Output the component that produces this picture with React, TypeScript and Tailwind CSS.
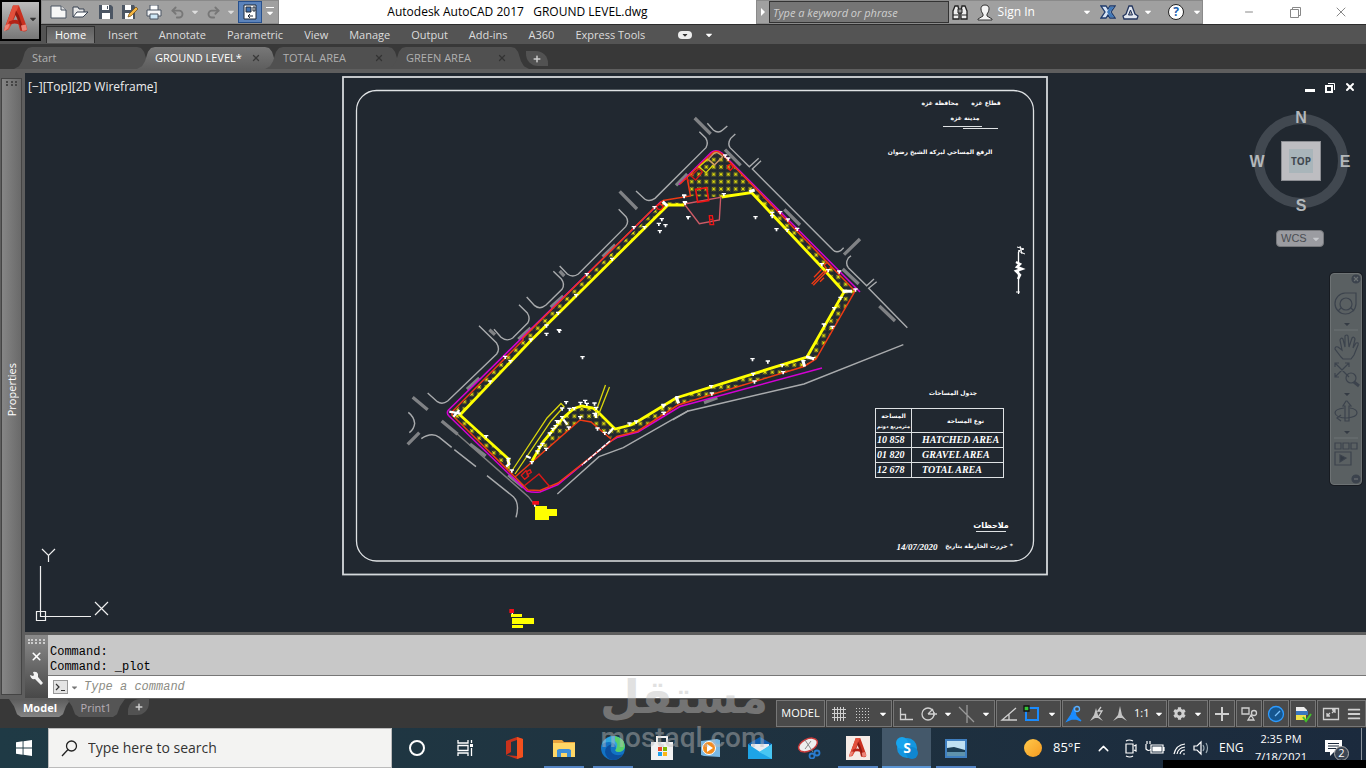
import React from "react";
import {
  FaBars,
  FaCaretDown,
  FaCog,
  FaPlus,
} from "react-icons/fa";
import {
  ChevronUp,
  Minus,
  Undo2,
  Redo2,
  X,
} from "lucide-react";

const menuTabs = [
  "Insert",
  "Annotate",
  "Parametric",
  "View",
  "Manage",
  "Output",
  "Add-ins",
  "A360",
  "Express Tools",
];

function AutocadMark({ className }: { className: string }) {
  return (
    <svg viewBox="0 0 24 27" className={className} aria-hidden="true">
      <path d="M9 0h6l8 22q1 4-3 4l-4-1L12 9 7 20l-4 5-3-1z" fill="#c9301f" />
      <path d="M9 0h6l-5 11-5 13-5 1z" fill="#e2503c" />
      <path d="M5 16q8-4 12 1v3q-6-4-13 0z" fill="#b32217" />
      <path d="M12 5l3 5 4 12-2 3q-1-9-6-16z" fill="#8f1a12" />
      <path d="M1 20l5-2-2 5-4 3zM17 20l5-1 1 5q-2 2-5 1z" fill="#ec8478" />
    </svg>
  );
}

function Caret({ className = "text-white" }: { className?: string }) {
  return <FaCaretDown className={"shrink-0 " + className} size={10} />;
}

function QuickAccess() {
  return (
    <div className="flex h-6 w-[238px] shrink-0 items-center border border-[#8a8a8a] bg-[#a0a0a0] pl-2">
      <button aria-label="New" className="w-[22px]">
        <svg width="17" height="14" viewBox="0 0 17 14">
          <path d="M1 1h10l5 4v8H1z" fill="#f6f6f6" stroke="#4b5563" />
          <path d="M11 1v4h5" fill="#ddd" stroke="#4b5563" />
        </svg>
      </button>
      <button aria-label="Open" className="w-[22px]">
        <svg width="17" height="14" viewBox="0 0 17 14">
          <path d="M1 12V2h5l1 2h5v3" fill="#e8e8e8" stroke="#374151" />
          <path d="M1 12l4-5h11l-5 5z" fill="#fff" stroke="#374151" />
        </svg>
      </button>
      <button aria-label="Save" className="flex w-6 justify-center">
        <svg width="14" height="14" viewBox="0 0 14 14">
          <path d="M0 0h12l2 2v12H0z" fill="#4b5563" />
          <path d="M3 0h7v5H3zM3 8h8v6H3z" fill="#fff" />
          <path d="M8 1h1v3H8z" fill="#4b5563" />
        </svg>
      </button>
      <button aria-label="Save As" className="flex w-6 justify-center">
        <svg width="16" height="14" viewBox="0 0 16 14">
          <path d="M0 0h12l1 2v12H0z" fill="#4b5563" />
          <path d="M3 0h6v5H3zM3 8h8v6H3z" fill="#fff" />
          <path d="M14 2l2 2-7 7-3 1 1-3z" fill="#f5b642" stroke="#6b4a12" strokeWidth=".7" />
        </svg>
      </button>
      <button aria-label="Plot" className="flex w-6 justify-center">
        <svg width="16" height="15" viewBox="0 0 16 15">
          <path d="M4 0h8v6H4z" fill="#fff" stroke="#4b5563" />
          <path d="M1 5h14v6H1z" fill="#f3f4f6" stroke="#4b5563" />
          <path d="M4 9h8v5H4z" fill="#cfe8f7" stroke="#4b5563" />
        </svg>
      </button>
      <button aria-label="Undo" className="ml-1 w-5 text-[#777]">
        <Undo2 size={15} strokeWidth={3} />
      </button>
      <button aria-label="Undo history" className="w-4">
        <Caret className="text-[#ddd]" />
      </button>
      <button aria-label="Redo" className="w-5 text-[#777]">
        <Redo2 size={15} strokeWidth={3} />
      </button>
      <button aria-label="Redo history" className="w-3">
        <Caret className="text-[#ddd]" />
      </button>
      <button
        aria-label="Workspace"
        className="flex h-[22px] w-6 shrink-0 items-center justify-center border border-[#27508c] bg-[#5b83bb]"
      >
        <svg width="14" height="16" viewBox="0 0 14 16">
          <path d="M1 1h12v14H1z" fill="#fff" stroke="#1f2937" />
          <path d="M3 3h5v5H3z" fill="#3f70b0" stroke="#1f2937" />
          <path d="M10 3h2v4h-2zM5 12h5M7 10l-2 2 2 2" fill="none" stroke="#1f2937" />
        </svg>
      </button>
      <button aria-label="Customize" className="flex flex-col items-center pl-[3px]">
        <span className="h-px w-2 bg-white" />
        <Caret />
      </button>
    </div>
  );
}

function SearchBlock() {
  return (
    <div className="flex h-6 w-[447px] shrink-0 items-center border border-[#8a8a8a] bg-[#a0a0a0]">
      <svg width="12" height="10" viewBox="0 0 12 10" className="shrink-0">
        <path d="M4 1l4 4-4 4z" fill="#fff" />
      </svg>
      <input
        aria-label="Search help"
        placeholder="Type a keyword or phrase"
        className="h-[22px] w-[180px] shrink-0 border border-[#333] bg-[#757575] px-[3px] text-[11px] italic text-white placeholder:text-[#cfcfcf]"
      />
      <button aria-label="Search" className="flex w-6 justify-center">
        <svg width="16" height="16" viewBox="0 0 16 16">
          <path d="M3 2h3l1 5v8H1V7zM10 2h3l2 5v8H9V7z" fill="#eee" stroke="#222" strokeWidth="1.300" />
          <path d="M6 5h4v4H6zM1 11h5M10 11h5" fill="#999" stroke="#222" />
        </svg>
      </button>
      <button className="flex w-[136px] items-center text-xs text-white">
        <svg width="18" height="17" viewBox="0 0 18 17" className="mx-1">
          <path d="M9 1c6 0 4 7 2 9v2l5 3v1H2v-1l5-3v-2C5 8 3 1 9 1z" fill="#f4f4f4" stroke="#333" />
        </svg>
        Sign In
        <span className="ml-auto pr-2">
          <Caret />
        </span>
      </button>
      <button aria-label="Exchange" className="w-6">
        <svg width="16" height="14" viewBox="0 0 16 14">
          <path d="M1 1h5l2 3 2-3h5l-4 6 4 6h-5l-2-3-2 3H1l4-6z" fill="#d9e5f5" stroke="#1e3a6b" strokeWidth="1.300" />
          <path d="M10 2h4l-4 5 4 5h-4L7 7z" fill="#3f78b8" />
        </svg>
      </button>
      <button aria-label="Autodesk 360" className="flex w-9 items-center">
        <svg width="17" height="15" viewBox="0 0 17 15">
          <path d="M7 1h3l3 8 3 2-1 3H2l-1-3 3-2z" fill="#e3e8f0" stroke="#24365e" strokeWidth="1.300" />
          <path d="M8.500 5l2 5h-4z" fill="#a0a0a0" stroke="#24365e" />
        </svg>
        <span className="pl-1">
          <Caret />
        </span>
      </button>
      <button aria-label="Help" className="ml-3 flex items-center">
        <span className="flex size-4 items-center justify-center rounded-full border border-[#222] bg-white text-xs font-bold text-[#1d5fae]">
          ?
        </span>
        <span className="pl-2">
          <Caret />
        </span>
      </button>
    </div>
  );
}

function Header() {
  return (
    <header className="flex bg-[#545454]">
      <button
        aria-label="Application menu"
        className="flex h-[41px] w-[41px] shrink-0 items-center border-2 border-black bg-linear-to-b from-[#bdbdbd] to-[#777] pb-1 pl-[2px]"
      >
        <AutocadMark className="h-7 w-6" />
        <FaCaretDown size={10} className="shrink-0 text-[#333]" />
      </button>
      <div className="flex min-w-0 flex-1 flex-col">
        <div className="flex h-[25px] items-start border-b border-[#2c2c2c] bg-white">
          <QuickAccess />
          <h1 className="min-w-0 flex-1 truncate text-center text-xs leading-6 text-black">
            Autodesk AutoCAD 2017 &nbsp; GROUND LEVEL.dwg
          </h1>
          <SearchBlock />
          <div className="flex h-6 w-[163px] shrink-0 justify-end pr-[2px] text-[#888]">
            <button aria-label="Minimize" className="flex w-[46px] items-center justify-center">
              <Minus size={12} strokeWidth={2} />
            </button>
            <button aria-label="Restore" className="flex w-[46px] items-center justify-center">
              <svg width="11" height="11" viewBox="0 0 11 11" fill="none" stroke="#888">
                <path d="M.5 2.500h8v8h-8zM2.500 2.500v-2h8v8h-2" />
              </svg>
            </button>
            <button aria-label="Close" className="flex w-[46px] items-center justify-center">
              <X size={16} strokeWidth={1.500} />
            </button>
          </div>
        </div>
        <nav className="flex h-[19px] items-center gap-[21px] pl-[5px] text-[11px] text-[#dcdcdc]">
          <button className="-mr-2 h-[17px] border border-b-0 border-[#2f2f2f] bg-linear-to-b from-[#606060] to-[#7a7a7a] px-2 leading-4 text-white">
            Home
          </button>
          {menuTabs.map((t) => (
            <button key={t} className="whitespace-nowrap leading-4">
              {t}
            </button>
          ))}
          <button aria-label="Ribbon display" className="ml-3 flex items-center gap-3">
            <span className="flex h-2 w-[14px] items-center justify-center rounded-sm bg-[#eee]">
              <FaCaretDown size={8} className="text-[#333]" />
            </span>
            <Caret />
          </button>
        </nav>
      </div>
    </header>
  );
}

const tabShape =
  "h-[22px] shrink-0 flex items-center pl-[18px] pr-[22px] text-[11px] [clip-path:polygon(0_100%,5px_88%,8px_65%,11px_22%,14px_5%,18px_0,calc(100%_-_18px)_0,calc(100%_-_14px)_5%,calc(100%_-_11px)_22%,calc(100%_-_8px)_65%,calc(100%_-_5px)_88%,100%_100%)]";

function FileTabs() {
  return (
    <div className="flex h-[29px] items-end border-b-4 border-[#5e5e5e] bg-[#383838] pl-[14px]">
      <button className={tabShape + " w-[141px] bg-[#505050] text-[#b0b0b0]"}>Start</button>
      <button className={tabShape + " relative -ml-[18px] w-[146px] bg-linear-to-b from-[#787878] to-[#5e5e5e] text-white"}>
        GROUND LEVEL*
        <X size={10} strokeWidth={3} className="ml-auto text-[#3a3a3a]" />
      </button>
      <button className={tabShape + " -ml-[18px] w-[141px] bg-[#505050] text-[#b0b0b0]"}>
        TOTAL AREA
        <X size={10} strokeWidth={3} className="ml-auto text-[#333]" />
      </button>
      <button className={tabShape + " -ml-[18px] w-[141px] bg-[#505050] text-[#b0b0b0]"}>
        GREEN AREA
        <X size={10} strokeWidth={3} className="ml-auto text-[#333]" />
      </button>
      <button
        aria-label="New tab"
        className="-ml-[3px] mb-[3px] flex h-[15px] w-[22px] items-center justify-center rounded-tr-xl rounded-bl-xl bg-[#525252] text-[#ccc]"
      >
        <FaPlus size={8} />
      </button>
    </div>
  );
}

const third = 1 / 3;

const ticksWest: [number, number][] = [
  [852, 78], [855, 100], [763, 113], [785, 149], [776, 163], [796, 167], [779, 185], [864, 143],
  [701, 173], [733, 173], [636, 268], [560, 314], [528, 377], [474, 430], [439, 468], [392, 510],
  [439, 493], [547, 563], [315, 562], [331, 575], [270, 636], [476, 482], [478, 484],
];
const ticksSouth: [number, number][] = [
  [258, 350], [325, 418], [335, 453], [498, 248], [486, 267], [508, 268], [522, 266], [541, 250],
  [555, 244], [560, 253], [583, 252], [588, 265], [540, 293], [506, 324], [486, 293], [475, 306],
  [466, 320], [458, 328], [449, 342], [438, 388], [427, 373], [418, 382], [412, 396], [395, 428],
  [583, 283], [592, 327], [614, 340], [688, 312], [708, 306], [790, 258], [790, 280], [470, 305],
];
const ticksEast: [number, number][] = [
  [375, 168], [384, 177], [254, 308], [252, 290], [371, 284], [264, 353], [466, 353], [529, 389],
  [540, 338], [516, 340], [516, 350], [563, 360], [591, 388], [561, 391], [665, 494], [684, 512],
  [717, 516], [766, 570], [734, 574], [721, 595], [702, 626], [671, 675], [697, 682], [457, 779],
  [503, 786], [546, 797], [549, 818], [459, 823], [463, 846], [333, 860], [335, 882], [190, 916],
  [191, 940], [639, 776], [232, 893], [610, 785],
];

function Ticks({ at }: { at: [number, number][] }) {
  return (
    <g fill="#fff">
      {at.map(([x, y], i) => (
        <path key={i} d={`M${x - 6} ${y - 5}h13v4h-4v6h-5v-6h-4z`} />
      ))}
    </g>
  );
}

function Drawing() {
  return (
    <svg
      className="block"
      width="1026"
      height="559"
      viewBox="25 73 1026 559"
      fill="none"
      role="img"
      aria-label="Ground level site plan"
    >
      <defs>
        <pattern id="planting" x="688" y="178" width="7.330" height="7.330" patternUnits="userSpaceOnUse">
          <path d="M1.700 1.700l4 4M5.700 1.700l-4 4M3.700 1.500v4.400M1.500 3.700h4.400" stroke="#bcb710" strokeWidth=".9" />
          <path d="M2.800 2.800h1.800v1.800H2.800z" fill="#e6e20c" />
        </pattern>
      </defs>

      <rect x="343" y="77" width="704" height="497.500" stroke="#d5d9dc" strokeWidth="1.800" />
      <rect x="356.500" y="90.500" width="677" height="470.500" rx="20" stroke="#dfe2e4" strokeWidth="1.300" />

      <g fill="url(#planting)">
        <path d="M687 176L714 152L725 157L755 189L750 193L721 197L690 196z" />
        <path d="M664 202L684 203L684 206L668 206L530 341L460 415L453 413L523 339z" />
        <path d="M755 189L855 291L816 359L804 367L678 405L638 430L615 436L611 430L640 420L676 398L807 357L845 292L822 267L751 192z" />
        <path d="M530 464L545 440L563 418L575 408L593 408L600 413L616 430L611 438L591 422L580 420L532 462z" />
        <path d="M460 415L510 460L510 472L453 415z" />
      </g>

      {/* roads around the site */}
      <g stroke="#a9abad" strokeWidth="4.200">
        <g transform={`translate(600 100) scale(${third})`}>
          <path d="M108 273L134 297Q147 307 165 295L318 143Q326 128 317 114L298 95" />
          <path d="M322 70L340 90Q355 102 368 90L382 78" />
          <path d="M406 102L392 115Q382 130 390 143L448 200L476 175M483 182L457 207L697 448Q707 460 722 452L731 443" />
          <path d="M753 467L745 474Q735 490 745 503L800 557L822 537M830 545L806 565L922 683" />
          <path d="M910 734L612 852L265 933L218 960" />
        </g>
        <g transform={`translate(400 170) scale(${third})`}>
          <path d="M656 118L678 140Q688 155 677 170L535 312Q518 324 502 312L479 288" />
          <path d="M460 304L484 327Q496 343 486 358L438 405Q420 420 404 407L380 381" />
          <path d="M357 404L382 429Q392 445 383 459L338 504Q320 516 303 502L282 478" />
          <path d="M237 467L289 518Q301 537 290 552L143 693Q127 705 112 695L83 669" />
        </g>
        <g transform={`translate(400 320) scale(${third})`}>
          <path d="M865 272L818 298L670 383L597 410L472 522" />
          <path d="M25 277Q42 290 44 310Q42 328 28 338M64 356Q95 335 118 352L155 382M163 389L228 440M261 467L340 530Q360 550 348 592" />
          <path d="M130 305L385 530L405 556" stroke="#808080" />
        </g>
      </g>
      <g stroke="#808285" strokeWidth="10">
        <g transform={`translate(400 170) scale(${third})`}>
          <path d="M659 64L711 117M608 260L646 224M479 303L493 318M452 412L490 378M355 508L392 474M268 479L285 494M201 658L238 624M38 682L83 719" />
        </g>
        <g transform={`translate(400 320) scale(${third})`}>
          <path d="M125 303L173 343M210 372L257 408M325 465L370 502M23 373L58 338" />
        </g>
        <g transform={`translate(600 100) scale(${third})`}>
          <path d="M284 54L332 102M228 256L262 222M375 149L422 196M553 328L600 375M732 464L780 417M728 507L776 552M838 618L885 663M312 908L352 893" />
        </g>
      </g>

      {/* site boundary */}
      <g strokeWidth="1.500">
        <path
          d="M679 184.500L711 152.500Q716 149 722 153L860 292M661 201.500L448.500 410Q446 413 449 416L510 475L527 491Q533 493 540 492L558 484.500L610 441.500L617 437.500L638 432L680 406.500L822 368"
          stroke="#d400d4"
        />
        <path
          d="M663 200.500L690.500 196L687 177M680 184L713 152.500Q718 149 725 157L855 291L816 359L804 366.500L712 394.500L678 405L657 418.500L638 431L617 436.500L558 483L540 490.500L528 490L515 477L452 415V412L523 340V338L653 209L663 200.500"
          stroke="#f03a14"
        />
        <path d="M515 477L580 420L591 422L611 439" stroke="#f03a14" />
        <path d="M524 486L539 474L550 487" stroke="#d81818" />
        <path d="M610 441L582 465" stroke="#fff" strokeDasharray="5 1" />
      </g>
      <g stroke="#ff0" strokeWidth="2.800">
        <path d="M684.500 205H668L530.500 341L460 415L509 459.500L508 466" />
        <path d="M721.500 197L751.500 192.500L822.500 268L844 292L807 357L676 398L640 420L631 425L615 429L599 413L593 408L582 406L574 408.500L563 418L543 442L532 461" />
      </g>
      <g stroke="#d9d60c" strokeWidth="1.300">
        <path d="M511.500 471.500L547 418L561 403.500L564 406.500L551 421L515 474" />
        <path d="M605.500 385L594 417M609.500 387L598 416" />
      </g>

      <g transform={`translate(600 100) scale(${third})`} strokeWidth="4">
        <path d="M253 312L298 371L358 360L362 292z" stroke="#cd5b66" />
        <path d="M287 268L320 263L326 302L293 307z" stroke="#f01414" strokeWidth="5" />
        <path d="M273 228L297 205L307 216L287 240zM258 234l10 10" stroke="#d81818" />
        <path d="M297 200L323 178L342 193L318 218z" stroke="#d9d60c" />
        <path d="M325 178L342 160Q352 153 368 170L343 195z" stroke="#d29a6a" />
        <path d="M328 347h9l4 27h-11zM327 358h12" stroke="#f01414" />
        <path d="M383 197l10-5 6 10-8 9-7-6zM170 318l12-6 8 8-8 10-10-4z" stroke="#f01414" />
        <path d="M635 552L674 512M640 556L682 512M642 532L665 508M660 545L672 533M672 495L682 487L694 500L684 512z" stroke="#f03a14" />
        <path d="M188 305L202 318M448 275L464 270M728 574H756M618 770L640 776M608 780L614 800M228 890L236 910" stroke="#fff" strokeWidth="9" />
      </g>
      <g transform={`translate(400 320) scale(${third})`}>
        <path d="M364 466l14-14 8 16-12 10zM380 455l10-6 4 8-12 8z" stroke="#e01a1a" strokeWidth="4" />
        <path d="M148 275l34 6M160 290l18-20M322 418l6 14-10 8M490 298l12 16M624 342l16-18M588 278v16M378 408l14 6" stroke="#fff" strokeWidth="7" />
        <path d="M397 543h20v11h-20zM328 867h14v12h-14z" fill="#f20d18" />
        <path d="M405 558h36v9h30v21h-24v12h-42zM333 882h33v9h-33zM336 894h66v18h-66zM336 915h33v9h-33z" fill="#ff0" />
        <path d="M402 554h5v6h-5zM335 879h4v4h-4z" fill="#fff" />
        <Ticks at={ticksSouth} />
      </g>
      <g transform={`translate(400 170) scale(${third})`}>
        <Ticks at={ticksWest} />
      </g>
      <g transform={`translate(600 100) scale(${third})`}>
        <Ticks at={ticksEast} />
      </g>

      {/* sheet titles */}
      <g
        fill="#fff"
        fontFamily="DejaVu Sans, sans-serif"
        fontWeight="700"
        fontSize="6"
        textAnchor="middle"
        direction="rtl"
      >
        <text x="986" y="105">قطاع غزة</text>
        <text x="940" y="105">محافظة غزة</text>
        <text x="965" y="120">مدينة غزة</text>
        <text x="940" y="154">الرفع المساحي لبركة الشيخ رضوان</text>
        <text x="953" y="395">جدول المساحات</text>
        <text x="991" y="528" fontSize="8">ملاحظات</text>
        <text x="979" y="548">* حررت الخارطة بتاريخ</text>
        <text x="917" y="550" fontFamily="Liberation Serif, serif" fontStyle="italic" fontSize="9" direction="ltr">
          14/07/2020
        </text>
      </g>
      <path d="M943 126.500h39M963 128.500h35M976 531.500h30" stroke="#dfe2e4" strokeWidth="1.200" />

      {/* north arrow */}
      <g stroke="#fff">
        <path d="M1018.500 252V294" strokeWidth="1.300" />
        <path d="M1017 247l7 2-6 2 7 3M1020 246l2 8" strokeWidth="1" />
        <path d="M1016 262l4 2-3 3 5 2-6 2 4 4-2 4" strokeWidth="2.500" />
        <path d="M1016 292h4" />
      </g>

      {/* coordinate system marker */}
      <path
        d="M40.500 566v50.500H91M36.500 611.500h9v9h-9zM42 549l6.500 6.500L55 549M48.500 555.500v6.500M95 602l13 13M108 602L95 615"
        stroke="#eee"
        strokeWidth="1.200"
      />
    </svg>
  );
}

const areas = [
  ["10 858", "HATCHED AREA"],
  ["01 820", "GRAVEL AREA"],
  ["12 678", "TOTAL AREA"],
];

function AreaTable() {
  return (
    <table className="absolute top-[335px] left-[850px] w-[129px] table-fixed border-collapse border border-[#dfe2e4] font-['Liberation_Serif','DejaVu_Sans',serif] text-[10px] leading-3 font-bold whitespace-nowrap text-white italic [&_td]:border [&_td]:border-[#dfe2e4] [&_th]:border [&_th]:border-[#dfe2e4]">
      <thead>
        <tr className="h-6 font-['DejaVu_Sans',sans-serif] text-[6px] leading-[10px] not-italic">
          <th className="w-9 p-0" dir="rtl">
            <p>المساحة</p>
            <p className="text-[5px]">مترمربع دونم</p>
          </th>
          <th className="p-0" dir="rtl">
            <span className="pl-4">نوع المساحة</span>
          </th>
        </tr>
      </thead>
      <tbody>
        {areas.map(([value, name]) => (
          <tr key={name}>
            <td className="px-px py-[1px]">{value}</td>
            <td className="py-[1px] pl-[10px]">{name}</td>
          </tr>
        ))}
      </tbody>
    </table>
  );
}

function ViewCube() {
  return (
    <div className="absolute top-[35px] right-[14px] flex flex-col items-center">
      <svg width="104" height="106" viewBox="0 0 104 106" fontFamily="Liberation Sans, sans-serif" fontWeight="700" textAnchor="middle">
        <circle cx="53" cy="53" r="42" fill="none" stroke="#414850" strokeWidth="10" />
        <rect x="33.500" y="33.500" width="39" height="39" fill="#bdbdc1" stroke="#8b8d92" />
        <rect x="41" y="41" width="24" height="24" fill="#a9b5ba" />
        <text x="53" y="57" fontSize="10" fill="#414850" fontFamily="Open Sans, sans-serif">TOP</text>
        <g fill="#b4b8bb" fontSize="16">
          <text x="53" y="15">N</text>
          <text x="53" y="103">S</text>
          <text x="9" y="59">W</text>
          <text x="97" y="59">E</text>
        </g>
      </svg>
      <button className="mt-4 flex h-[17px] w-12 items-center gap-1 rounded border border-[#75777b] bg-[#9b9ca1] pl-1 font-['Liberation_Sans',sans-serif] text-[11px] text-[#4a4d52]">
        WCS
        <FaCaretDown size={10} className="text-[#c6c8cc]" />
      </button>
    </div>
  );
}

function NavBar() {
  return (
    <div className="absolute top-[200px] right-1 w-8 rounded border border-[#6d7274] bg-[#5a6062] shadow-[0_0_0_1px_#171b21]">
      <svg width="30" height="210" viewBox="0 0 30 210" fill="none" stroke="#3c434d" strokeWidth="1.200">
        <circle cx="25" cy="5" r="4" fill="#3c434d" />
        <path d="M23 3l4 4M27 3l-4 4" stroke="#6b7173" />
        <path d="M14 19h11v11a10.500 10.500 0 1 1-11-11z" />
        <circle cx="15" cy="30" r="6" />
        <path d="M10 34l-3 3M20 34l3 3" />
        <path d="M13 49h6l-3 3zM13 119h6l-3 3zM13 157h6l-3 3z" fill="#343b44" stroke="none" />
        <path d="M3 56h24M3 164h24" stroke="#6d7274" />
        <path d="M10 83l-6-8q0-3 3-2l4 3-2-10q1-3 3-1l2 8 0-11q2-2 3 0l1 11 3-9q2-2 3 1l-2 9 3-5q3-1 2 2l-4 10-3 4h-8z" />
        <path d="M4 89l14 14M18 89L4 103M4 93v-4h4M14 89h4v4M8 103H4v-4" />
        <circle cx="20" cy="104" r="5" />
        <path d="M23 108l5 4" strokeWidth="3" />
        <path d="M15 127l-3 5h2v15h4v-15h2l-4-5z" />
        <path d="M13 134q-9 1-9 5 1 5 12 5 10-1 10-5 0-4-7-5M10 141l-4 3 4 3" />
        <path d="M4 169h6v6H4zM12 169h6v6h-6zM20 169h6v6h-6zM4 178h16v13H4z" />
        <path d="M9 181l6 3-6 4z" fill="#343b44" />
        <circle cx="25" cy="205" r="4" fill="#3c434d" />
        <path d="M23 205h4" stroke="#6b7173" />
      </svg>
    </div>
  );
}

function Canvas() {
  return (
    <main className="relative min-h-[559px] flex-1 overflow-hidden bg-[#212830]">
      <Drawing />
      <AreaTable />
      <p className="absolute top-[5px] left-[3px] text-xs leading-[18px] text-[#eee]">
        [−][Top][2D Wireframe]
      </p>
      <div className="absolute top-2 right-[10px] flex gap-[8px] text-white">
        <button aria-label="Minimize drawing" className="flex size-3 items-end justify-center">
          <span className="mb-[1px] h-[3px] w-[10px] bg-white" />
        </button>
        <button aria-label="Restore drawing" className="flex size-3 items-center justify-center">
          <svg width="11" height="11" viewBox="0 0 11 11" fill="none" stroke="#fff">
            <path d="M1 4h6v6H1z" strokeWidth="2" />
            <path d="M3 1.500h6.500V8" />
          </svg>
        </button>
        <button aria-label="Close drawing" className="flex size-3 items-center justify-center">
          <X size={12} strokeWidth={4} />
        </button>
      </div>
      <ViewCube />
      <NavBar />
    </main>
  );
}

function CommandPanel() {
  return (
    <section className="flex border-t-[3px] border-b border-[#5e5e5e] bg-white" aria-label="Command line">
      <div className="flex w-[23px] shrink-0 flex-col items-center bg-linear-to-b from-[#8a8a8a] to-[#484848] pt-[4px] text-white">
        <span className="h-[5px] w-[17px] border-y-2 border-dotted border-[#ccc]" />
        <button aria-label="Close command line" className="mt-[6px]">
          <X size={13} strokeWidth={3} />
        </button>
        <button aria-label="Customize command line" className="mt-2">
          <svg width="15" height="15" viewBox="0 0 15 15">
            <path d="M1 4l3 1 1-1-1-3q4-1 5 2v3l5 6-2 2-6-6Q2 9 1 4z" fill="#f2f2f2" />
          </svg>
        </button>
      </div>
      <div className="min-w-0 flex-1 font-['Liberation_Mono',monospace] text-xs">
        <div className="border-b border-[#777] bg-[#c8c8c8] pt-[10px] pr-1 pl-[2px] leading-[15px] text-black">
          <p>Command:</p>
          <p>Command: _plot</p>
        </div>
        <div className="flex h-[22px] items-center bg-white pl-[5px]">
          <span className="flex h-[14px] w-[15px] items-center justify-center border border-[#999] bg-[#e4e4e4]">
            <svg width="11" height="9" viewBox="0 0 11 9" fill="none" stroke="#333" strokeWidth="1.200">
              <path d="M1 1l3 3-3 3M6 7.500h4" />
            </svg>
          </span>
          <FaCaretDown size={9} className="mx-[2px] text-[#777]" />
          <input
            aria-label="Command"
            placeholder="Type a command"
            className="min-w-0 flex-1 pl-[3px] italic outline-none placeholder:text-[#8d8d85]"
          />
        </div>
      </div>
    </section>
  );
}

function StatusGroup({ children, className }: { children: React.ReactNode; className: string }) {
  return (
    <div className={"flex h-[27px] shrink-0 items-center justify-around border border-[#777] bg-[#4a4a4a] " + className}>
      {children}
    </div>
  );
}

function StatusIcon({ label, children }: { label: string; children: React.ReactNode }) {
  return (
    <button aria-label={label} className="shrink-0">
      <svg width="18" height="18" viewBox="0 0 18 18" fill="none" stroke="#d0d0d0" strokeWidth="1.300">
        {children}
      </svg>
    </button>
  );
}

function StatusBar() {
  return (
    <div className="flex h-[29px] items-start bg-[#383838]">
      <div className="flex pl-[9px] text-xs">
        <button className="h-[18px] w-[62px] bg-linear-to-b from-[#5c5c5c] to-[#858585] text-[11px] font-bold leading-[18px] text-white [clip-path:polygon(0_0,100%_0,57px_40%,54px_85%,50px_100%,12px_100%,8px_85%,5px_40%)]">
          Model
        </button>
        <button className="-ml-[4px] h-[18px] w-[58px] bg-[#555] text-[11px] leading-[18px] text-[#b5aeb5] [clip-path:polygon(0_0,100%_0,53px_40%,50px_85%,46px_100%,12px_100%,8px_85%,5px_40%)]">
          Print1
        </button>
        <button
          aria-label="New layout"
          className="ml-[3px] flex h-4 w-[21px] items-center justify-center rounded-tl-xl rounded-br-xl bg-[#525252] text-[#ccc]"
        >
          <FaPlus size={8} />
        </button>
      </div>
      <div className="ml-auto flex gap-px pt-[1px]">
        <StatusGroup className="w-[49px]">
          <button className="text-[11px] text-white">MODEL</button>
        </StatusGroup>
        <StatusGroup className="w-[66px]">
          <StatusIcon label="Grid">
            <path d="M4.500 2v14M7.500 2v14M10.500 2v14M13.500 2v14M2 4.500h14M2 8.500h14M2 12.500h14" strokeWidth="1" />
          </StatusIcon>
          <StatusIcon label="Snap">
            <path d="M2 3.500h14M2 6.500h14M2 9.500h14M2 12.500h14M2 15.500h14" strokeDasharray="1 2" strokeWidth="1" />
          </StatusIcon>
          <Caret />
        </StatusGroup>
        <StatusGroup className="w-[102px]">
          <StatusIcon label="Ortho">
            <path d="M3.500 3v11.500H16M3.500 9.500h5v5" />
          </StatusIcon>
          <StatusIcon label="Polar">
            <circle cx="8" cy="9" r="6" />
            <path d="M8 9h9M8 9l5-5M14 7v4" />
          </StatusIcon>
          <Caret />
          <StatusIcon label="Isodraft">
            <path d="M1 2l15 15M9 0v18" stroke="#999" />
          </StatusIcon>
          <Caret />
        </StatusGroup>
        <StatusGroup className="w-[65px]">
          <StatusIcon label="Object tracking">
            <path d="M16 3L2 15h15M9 9v6" />
          </StatusIcon>
          <StatusIcon label="Object snap">
            <path d="M3 3h12v12H3z" stroke="#1a8cff" strokeWidth="2" />
            <path d="M1 1h5v5H1z" fill="#35c435" stroke="#111" />
          </StatusIcon>
          <Caret />
        </StatusGroup>
        <StatusGroup className="w-[105px]">
          <StatusIcon label="Annotation visibility">
            <path d="M9 3l2 8 5 5-5-2H7l-5 2 4-6z" fill="#1a8cff" stroke="#1a8cff" />
            <circle cx="12" cy="4" r="2.500" stroke="#5bb0ff" />
          </StatusIcon>
          <StatusIcon label="Auto scale">
            <path d="M8 3l2 7 5 6-5-3H7l-5 3 4-6z" fill="#c4c4c4" stroke="none" />
            <path d="M13 2l-3 4h4l-3 5" />
          </StatusIcon>
          <StatusIcon label="Annotation scale">
            <path d="M9 1l2 9 5 6-5-3H7l-5 3 5-6z" fill="#c4c4c4" stroke="none" />
          </StatusIcon>
          <button className="flex items-center gap-1 text-[11px] text-white">
            1:1 <Caret />
          </button>
        </StatusGroup>
        <StatusGroup className="w-10">
          <FaCog size={13} className="text-[#d0d0d0]" />
          <Caret />
        </StatusGroup>
        <StatusGroup className="w-[26px]">
          <StatusIcon label="Annotation monitor">
            <path d="M9 2v14M2 9h14" strokeWidth="2" />
          </StatusIcon>
        </StatusGroup>
        <StatusGroup className="w-[26px]">
          <StatusIcon label="Isolate">
            <path d="M2 3h7v6H2zM8 15l3-5 3 5z" />
            <circle cx="14" cy="8" r="2.500" />
          </StatusIcon>
        </StatusGroup>
        <StatusGroup className="w-[26px]">
          <StatusIcon label="Hardware acceleration">
            <circle cx="9" cy="9" r="7.500" stroke="#2d9bff" fill="#15568f" />
            <path d="M8 11l5-5" stroke="#7cc4ff" />
          </StatusIcon>
        </StatusGroup>
        <StatusGroup className="w-[26px]">
          <StatusIcon label="Clean screen">
            <path d="M2 2h8l3 3v3H2z" fill="#eee" stroke="none" />
            <path d="M2 6h12v4H2z" fill="#3976bd" stroke="none" />
            <path d="M2 10h10v5H2z" fill="#efe04a" stroke="none" />
            <path d="M9 12l3 4 5-7" stroke="#42c12b" strokeWidth="2" />
          </StatusIcon>
        </StatusGroup>
        <StatusGroup className="w-[49px]">
          <StatusIcon label="Full screen">
            <path d="M1.500 3.500h15v11h-15zM5 11l3-3M10 8l3-3M10 5h3v3M5 8v3h3" />
          </StatusIcon>
          <FaBars size={14} className="text-[#d0d0d0]" />
        </StatusGroup>
      </div>
    </div>
  );
}

function TaskItem({
  label,
  state = "",
  children,
}: {
  label: string;
  state?: string;
  children: React.ReactNode;
}) {
  return (
    <button aria-label={label} className={"flex h-10 w-[49px] shrink-0 items-center justify-center " + state}>
      {children}
    </button>
  );
}

const running = "bg-[linear-gradient(#5585c4,#5585c4)] bg-size-[40px_2px] bg-bottom bg-no-repeat";

function Taskbar() {
  return (
    <footer className="relative flex h-10 shrink-0 items-center bg-linear-to-r from-[#1f3a45] via-[#1f3340] to-[#1b2a3d] text-white">
      <button aria-label="Start" className="flex w-12 shrink-0 justify-center">
        <svg width="16" height="16" viewBox="0 0 16 16" fill="#fff">
          <path d="M0 2.300L6.600 1.300v6.200H0zM7.500 1.200L16 0v7.500H7.500zM0 8.400h6.600v6.300L0 13.700zM7.500 8.400H16V16l-8.500-1.200z" />
        </svg>
      </button>
      <label className="flex h-10 w-[344px] shrink-0 items-center border border-[#bbb] bg-[#f3f3f2] pl-3 text-[#222]">
        <svg width="17" height="17" viewBox="0 0 17 17" fill="none" stroke="#222" strokeWidth="1.300">
          <circle cx="10.500" cy="6" r="5" />
          <path d="M7 9.500L1 16" />
        </svg>
        <input
          aria-label="Search Windows"
          placeholder="Type here to search"
          className="ml-[10px] min-w-0 flex-1 text-sm outline-none placeholder:text-[#333]"
        />
      </label>
      <TaskItem label="Cortana">
        <span className="size-4 rounded-full border-2 border-white" />
      </TaskItem>
      <TaskItem label="Task view">
        <svg width="17" height="16" viewBox="0 0 17 16" fill="none" stroke="#fff" strokeWidth="1.300">
          <path d="M1 0v3h10V0M1 5.500h10v5H1zM1 16v-3h10v3M14.500 0v3M14.500 8v8" />
          <path d="M13 4h3v3h-3z" fill="#fff" stroke="none" />
        </svg>
      </TaskItem>
      <TaskItem label="Office">
        <svg width="19" height="22" viewBox="0 0 19 22">
          <path d="M12 0l6 2v18l-6 2-11-4 11 1V3L6 5v10l-5 3V4z" fill="#c8321c" />
          <path d="M12 0l6 2v18l-6 2z" fill="#f2501e" />
        </svg>
      </TaskItem>
      <TaskItem label="File Explorer" state={running}>
        <svg width="22" height="19" viewBox="0 0 22 19">
          <path d="M0 1h9l2 2h11v15H0z" fill="#e8a33d" />
          <path d="M0 4h22v14H0z" fill="#ffd766" />
          <path d="M4 18v-7l2-1h10l2 1v7h-4v-4H8v4z" fill="#3f8fd8" />
        </svg>
      </TaskItem>
      <TaskItem label="Edge" state={running}>
        <svg width="24" height="24" viewBox="0 0 24 24">
          <circle cx="12" cy="12" r="12" fill="#1273c4" />
          <path d="M1 8Q5 0 13 0q10 1 11 10 0 5-6 6-5 0-3-3Q15 6 8 6 4 6 1 8z" fill="#2fa5dc" />
          <path d="M14 0q9 2 10 10-1 6-7 6-4-1-2-3 3-5-1-8z" fill="#56cf6b" />
          <path d="M22 18q-6 3-11-1-3-5 0-9-7 2-7 8 1 7 8 8 6 0 10-6z" fill="#0c4f9e" />
        </svg>
      </TaskItem>
      <TaskItem label="Store">
        <svg width="24" height="24" viewBox="0 0 24 24">
          <path d="M7 7V1h10v6" fill="none" stroke="#f2f2f2" strokeWidth="2" />
          <path d="M1 6h22v18H1z" fill="#f2f2f2" />
          <path d="M8 11h4v4H8z" fill="#e8472b" />
          <path d="M13 11h4v4h-4z" fill="#7fba00" />
          <path d="M8 16h4v4H8z" fill="#1fa0ea" />
          <path d="M13 16h4v4h-4z" fill="#fbb615" />
        </svg>
      </TaskItem>
      <TaskItem label="Media player">
        <svg width="20" height="20" viewBox="0 0 20 20">
          <path d="M0 3l16-2 3 1v17l-16-1-3-1z" fill="#79b8e3" />
          <circle cx="8" cy="10" r="6.500" fill="#f28c1e" stroke="#fff" />
          <path d="M6 6l6 4-6 4z" fill="#fff" />
        </svg>
      </TaskItem>
      <TaskItem label="Mail">
        <svg width="24" height="22" viewBox="0 0 24 22">
          <path d="M0 7L12 0l12 7v15H0z" fill="#0f5fae" />
          <path d="M3 7h18v9H3z" fill="#e9eef2" />
          <path d="M0 7l12 8 12-8v15H0z" fill="#1ea4e6" />
          <path d="M24 7v15L11 15z" fill="#48c6f2" />
        </svg>
      </TaskItem>
      <TaskItem label="Snipping Tool">
        <svg width="24" height="22" viewBox="0 0 24 22">
          <ellipse cx="11" cy="8" rx="10" ry="6" transform="rotate(-25 11 8)" fill="#eee" stroke="#c93a3a" strokeWidth="1.500" />
          <path d="M8 3l8 12M14 4L8 12" stroke="#888" />
          <g fill="none" stroke="#2a7bd0" strokeWidth="1.800">
            <circle cx="20" cy="16" r="2.500" />
            <circle cx="15" cy="19" r="2.500" />
          </g>
        </svg>
      </TaskItem>
      <TaskItem label="AutoCAD" state={running}>
        <span className="flex size-6 items-center justify-center bg-[#f5ebe6]">
          <AutocadMark className="h-5 w-[18px]" />
        </span>
      </TaskItem>
      <TaskItem label="Skype" state="bg-[#44586a] shadow-[inset_0_-2px_#5b95d4]">
        <svg width="22" height="22" viewBox="0 0 22 22">
          <circle cx="11" cy="11" r="10" fill="#1496e0" />
          <circle cx="6" cy="6" r="6" fill="#17a4ee" />
          <circle cx="16" cy="16" r="6" fill="#0f86d0" />
          <text x="11" y="16" fontSize="14" fontWeight="700" fill="#fff" textAnchor="middle">S</text>
        </svg>
      </TaskItem>
      <TaskItem label="Photos" state={running}>
        <svg width="22" height="19" viewBox="0 0 22 19">
          <path d="M0 0h22v19H0z" fill="#3f7fc0" />
          <path d="M2 2h18v15H2z" fill="#bfe0f2" />
          <path d="M2 9l7-1 11 3v6H2z" fill="#1c3e55" />
          <path d="M2 13h18v4H2z" fill="#5f93ad" />
        </svg>
      </TaskItem>
      <div className="ml-auto flex h-10 shrink-0 items-center pr-1">
        <span className="size-[18px] rounded-full bg-linear-to-br from-[#ffc94a] to-[#f59a1d]" />
        <span className="ml-[11px] w-[42px] text-[13px]">85°F</span>
        <button aria-label="Show hidden icons">
          <ChevronUp size={17} />
        </button>
        <svg width="107" height="20" viewBox="0 0 107 20" fill="none" stroke="#fff" strokeWidth="1.200" aria-hidden="true">
          <path d="M14 6h7v9h-7zM22 8l2-1v6l-2-1M14 3q3-2 7 0M14 18q4 2 7 0" />
          <path d="M39 7h12v8H39zM52 9v4M34 6v5q3 3 5 0M35 3v3M38 3v3" />
          <path d="M41 9h8v4h-8z" fill="#fff" />
          <path d="M62 16q2-9 11-10M65 16q1-6 8-7M68 16q1-4 5-4M71 16h2" />
          <path d="M82 8h3l4-4v12l-4-4h-3z" />
          <path d="M91 7q2 3 0 6M94 5q3 5 0 10" stroke="#9aa8b0" />
        </svg>
        <span className="w-[31px] text-xs">ENG</span>
        <div className="w-[62px] text-center text-[11px] leading-[18px]">
          <p>2:35 PM</p>
          <p>7/18/2021</p>
        </div>
        <button aria-label="Notifications" className="relative ml-[6px] flex w-8 items-center justify-center">
          <svg width="18" height="17" viewBox="0 0 18 17">
            <path d="M0 0h17v12h-8l-4 4v-4H0z" fill="#fff" />
            <path d="M3 3.500h11M3 6h11M3 8.500h8" stroke="#1b2a3d" />
          </svg>
          <span className="absolute top-[6px] left-4 flex size-[15px] items-center justify-center rounded-full border border-[#aaa] bg-[#3b4654] text-[11px] leading-3">
            2
          </span>
        </button>
        <span className="ml-[11px] h-10 w-px bg-[#8a929c]" />
      </div>
      <div className="absolute right-0 bottom-0 h-2 w-[203px] bg-black" />
    </footer>
  );
}

export default function App() {
  return (
    <div className="relative flex min-h-screen flex-col bg-[#383838] font-['Open_Sans',sans-serif]">
      <Header />
      <FileTabs />
      <div className="flex flex-1">
        <aside className="flex w-[25px] shrink-0 bg-[#5e5e5e] pt-[5px] pr-[3px] pb-1 pl-px">
          <div className="flex flex-1 flex-col items-center border border-[#444] bg-linear-to-r from-[#868686] to-[#696969]">
            <span className="mt-[2px] h-[5px] w-[11px] border-y-2 border-dotted border-[#444]" />
            <div className="flex flex-1 items-center">
              <span className="rotate-180 text-[11px] leading-4 text-white [writing-mode:vertical-rl]">Properties</span>
            </div>
          </div>
        </aside>
        <div className="flex min-w-0 flex-1 flex-col">
          <Canvas />
          <CommandPanel />
        </div>
      </div>
      <StatusBar />
      <Taskbar />
      <div className="pointer-events-none absolute bottom-[16px] left-[600px] w-[166px] text-center font-bold text-[#bdbdbd] opacity-45">
        <p className="mb-1 font-['DejaVu_Sans',sans-serif] text-[46px] leading-[46px]" lang="ar">مستقل</p>
        <p className="font-[Roboto,sans-serif] text-[28px] leading-[28px] font-medium">mostaql.com</p>
      </div>
    </div>
  );
}
